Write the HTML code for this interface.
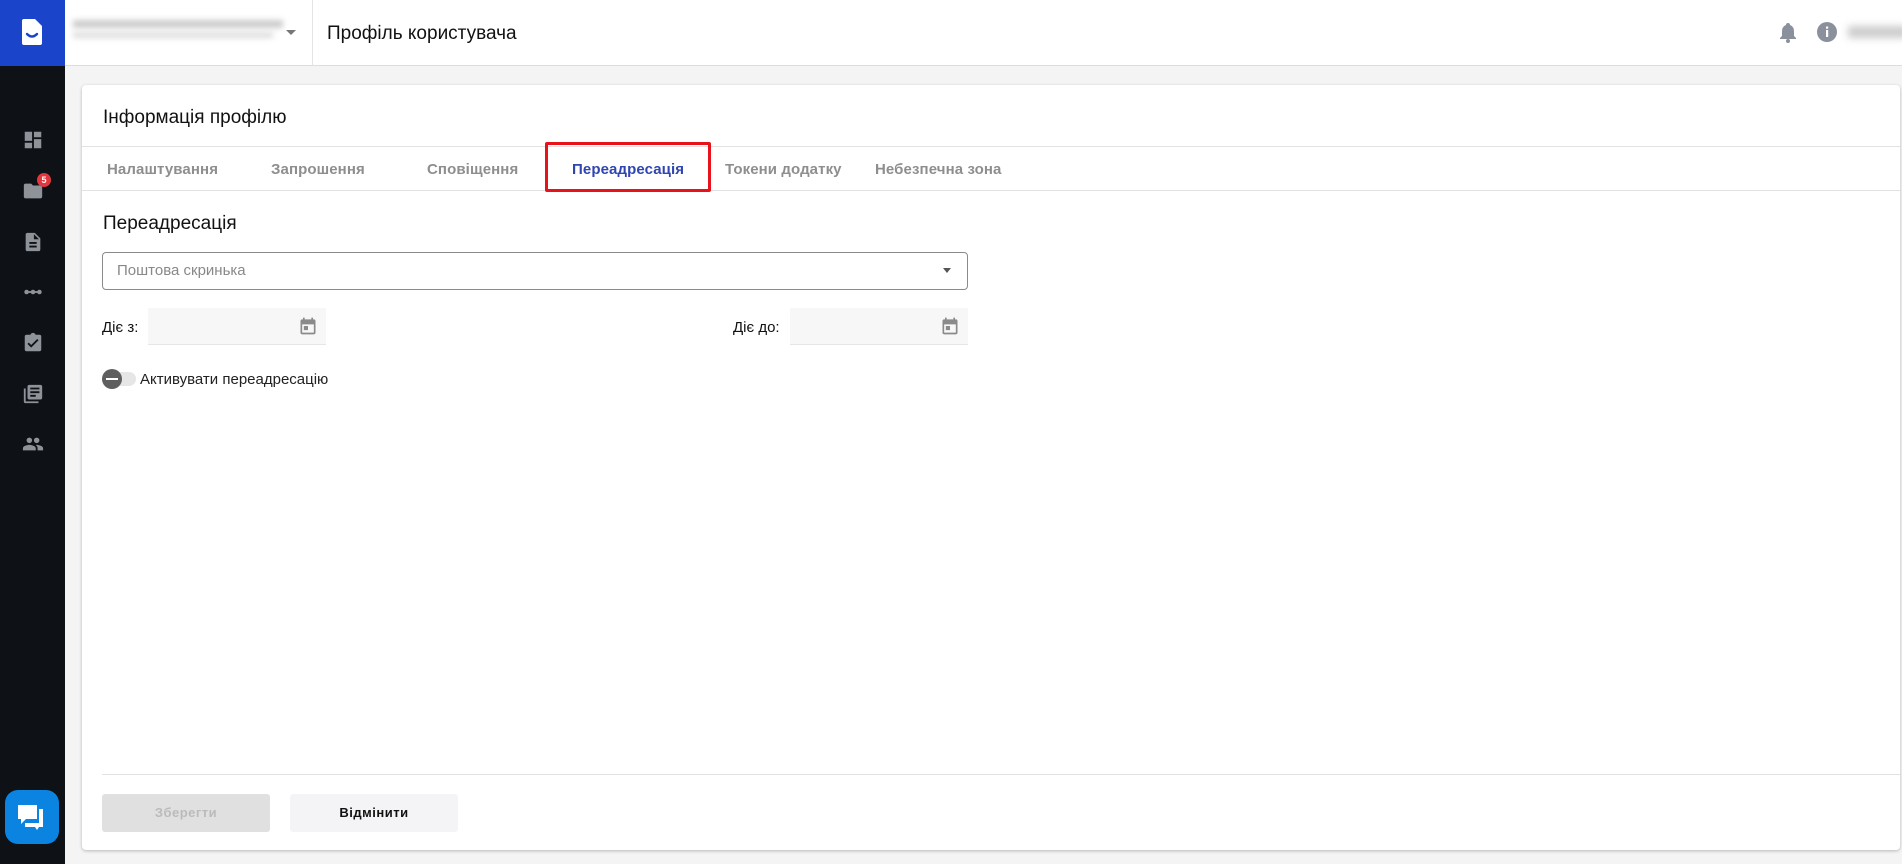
<!DOCTYPE html>
<html><head><meta charset="utf-8"><style>
*{box-sizing:border-box;margin:0;padding:0}
body{width:1902px;height:864px;overflow:hidden;background:#f4f4f4;font-family:"Liberation Sans",sans-serif;position:relative;color:#111}
.abs{position:absolute}
#side{left:0;top:0;width:65px;height:864px;background:#0e1116}
#logo{left:0;top:0;width:65px;height:66px;background:#1a44c9}
#top{left:65px;top:0;right:0;height:66px;background:#fff;border-bottom:1px solid #ddd}
.ic{position:absolute;left:22px;width:22px;height:22px}
#card{left:82px;top:85px;width:1818px;height:765px;background:#fff;border-radius:4px;box-shadow:0 1px 3px rgba(0,0,0,.25)}
.tab{position:absolute;top:161px;font-size:15px;font-weight:bold;color:#8e8e8e;letter-spacing:.1px}
</style></head><body>
<div id="side" class="abs"></div>
<div id="logo" class="abs"><svg class="abs" style="left:21px;top:18px" width="22" height="28" viewBox="0 0 22 28"><path d="M3 1h11l7 7v17a2 2 0 0 1-2 2H3a2 2 0 0 1-2-2V3a2 2 0 0 1 2-2z" fill="#fff"/><path d="M6 16q5 5 10 0" stroke="#1a44c9" stroke-width="2.4" fill="none" stroke-linecap="round"/></svg></div>
<div id="top" class="abs">
 <div class="abs" style="left:8px;top:20px;width:210px;height:8px;background:#ccc;filter:blur(3px)"></div>
 <div class="abs" style="left:8px;top:32px;width:200px;height:6px;background:#ddd;filter:blur(3px)"></div>
 <div class="abs" style="left:221px;top:30px;border:5px solid transparent;border-top:5px solid #777"></div>
 <div class="abs" style="left:247px;top:0;width:1px;height:66px;background:#e4e4e4"></div>
 <div class="abs" style="left:262px;top:23px;font-size:19px">Профіль користувача</div>
 <svg class="abs" style="left:1714px;top:22px" width="18" height="22" viewBox="0 0 18 22"><path d="M9 1a2 2 0 0 1 2 2 6 6 0 0 1 4 6v5l2 2v1H1v-1l2-2V9a6 6 0 0 1 4-6 2 2 0 0 1 2-2z" fill="#8a919c"/><circle cx="9" cy="19" r="2" fill="#8a919c"/></svg>
 <svg class="abs" style="left:1751px;top:21px" width="22" height="22"><circle cx="11" cy="11" r="10" fill="#8a919c"/><rect x="10" y="9" width="2.2" height="7" fill="#fff"/><rect x="10" y="5.5" width="2.2" height="2.2" fill="#fff"/></svg>
 <div class="abs" style="left:1783px;top:26px;width:60px;height:12px;background:#ccc;filter:blur(4px)"></div>
</div>
<svg class="ic" style="top:129px" viewBox="0 0 24 24"><path d="M3 13h8V3H3zm0 8h8v-6H3zm10 0h8V11h-8zm0-18v6h8V3z" fill="#8e9299"/></svg>
<svg class="ic" style="top:180px" viewBox="0 0 24 24"><path d="M10 4H4a2 2 0 0 0-2 2v12a2 2 0 0 0 2 2h16a2 2 0 0 0 2-2V8a2 2 0 0 0-2-2h-8z" fill="#8e9299"/></svg>
<div class="abs" style="left:37px;top:173px;width:14px;height:14px;border-radius:50%;background:#e0383e;color:#fff;font-size:9px;font-weight:bold;text-align:center;line-height:14px">5</div>
<svg class="ic" style="top:231px" viewBox="0 0 24 24"><path d="M14 2H6a2 2 0 0 0-2 2v16a2 2 0 0 0 2 2h12a2 2 0 0 0 2-2V8zm2 16H8v-2h8zm0-4H8v-2h8zm-3-5V3.5L18.5 9z" fill="#8e9299"/></svg>
<svg class="ic" style="top:281px" viewBox="0 0 24 24"><circle cx="5" cy="12" r="2.5" fill="#8e9299"/><circle cx="12" cy="12" r="2.5" fill="#8e9299"/><circle cx="19" cy="12" r="2.5" fill="#8e9299"/><rect x="5" y="11" width="14" height="2" fill="#8e9299"/></svg>
<svg class="ic" style="top:332px" viewBox="0 0 24 24"><path d="M19 3h-4.2A3 3 0 0 0 12 1a3 3 0 0 0-2.8 2H5a2 2 0 0 0-2 2v14a2 2 0 0 0 2 2h14a2 2 0 0 0 2-2V5a2 2 0 0 0-2-2zm-9 14l-4-4 1.4-1.4 2.6 2.6 6.6-6.6L18 9z" fill="#8e9299"/></svg>
<svg class="ic" style="top:383px" viewBox="0 0 24 24"><path d="M4 6H2v14a2 2 0 0 0 2 2h14v-2H4zm16-4H8a2 2 0 0 0-2 2v12a2 2 0 0 0 2 2h12a2 2 0 0 0 2-2V4a2 2 0 0 0-2-2zm-1 9H9V9h10zm-4 4H9v-2h6zm4-8H9V5h10z" fill="#8e9299"/></svg>
<svg class="ic" style="top:433px" viewBox="0 0 24 24"><path d="M16 11a3 3 0 1 0 0-6 3 3 0 0 0 0 6zm-8 0a3 3 0 1 0 0-6 3 3 0 0 0 0 6zm0 2c-2.3 0-7 1.2-7 3.5V19h14v-2.5C15 14.2 10.3 13 8 13zm8 0c-.3 0-.6 0-1 .1 1.2.8 2 2 2 3.4V19h6v-2.5c0-2.3-4.7-3.5-7-3.5z" fill="#8e9299"/></svg>
<div class="abs" style="left:5px;top:790px;width:54px;height:54px;border-radius:13px;background:#0a84e0">
<svg class="abs" style="left:13px;top:15px" width="28" height="26" viewBox="0 0 28 26"><rect x="0" y="0" width="19" height="14" fill="#fff"/><path d="M3 14v5l5-5z" fill="#fff"/><path d="M21 4h4v18h-4l-2 3-2-3H7v-4h14z" fill="#fff"/></svg></div>

<div id="card" class="abs"></div>
<div class="abs" style="left:103px;top:107px;font-size:19px">Інформація профілю</div>
<div class="abs" style="left:82px;top:146px;width:1818px;height:1px;background:#e2e2e2"></div>
<div class="abs" style="left:82px;top:190px;width:1818px;height:1px;background:#e2e2e2"></div>
<div class="tab" style="left:107px">Налаштування</div>
<div class="tab" style="left:271px">Запрошення</div>
<div class="tab" style="left:427px">Сповіщення</div>
<div class="tab" style="left:572px;color:#2f45b0">Переадресація</div>
<div class="tab" style="left:725px">Токени додатку</div>
<div class="tab" style="left:875px">Небезпечна зона</div>
<div class="abs" style="left:545px;top:142px;width:166px;height:50px;border:3px solid #e8121b;border-radius:2px"></div>

<div class="abs" style="left:103px;top:213px;font-size:19px">Переадресація</div>
<div class="abs" style="left:102px;top:252px;width:866px;height:38px;border:1px solid #8a8a8a;border-radius:4px"></div>
<div class="abs" style="left:117px;top:262px;font-size:15px;color:#888">Поштова скринька</div>
<div class="abs" style="left:943px;top:268px;border:4px solid transparent;border-top:5px solid #555"></div>

<div class="abs" style="left:102px;top:319px;font-size:15px">Діє з:</div>
<div class="abs" style="left:148px;top:308px;width:178px;height:37px;background:#f7f7f7;border-bottom:1px solid #e6e6e6"></div>
<div class="abs" style="left:733px;top:319px;font-size:15px">Діє до:</div>
<div class="abs" style="left:790px;top:308px;width:178px;height:37px;background:#f7f7f7;border-bottom:1px solid #e6e6e6"></div>
<svg class="abs" style="left:298px;top:316px" width="20" height="20" viewBox="0 0 24 24"><path d="M19 4h-1V2h-2v2H8V2H6v2H5a2 2 0 0 0-2 2v14a2 2 0 0 0 2 2h14a2 2 0 0 0 2-2V6a2 2 0 0 0-2-2zm0 16H5V10h14zM7 12h5v5H7z" fill="#8a8a8a"/></svg>
<svg class="abs" style="left:940px;top:316px" width="20" height="20" viewBox="0 0 24 24"><path d="M19 4h-1V2h-2v2H8V2H6v2H5a2 2 0 0 0-2 2v14a2 2 0 0 0 2 2h14a2 2 0 0 0 2-2V6a2 2 0 0 0-2-2zm0 16H5V10h14zM7 12h5v5H7z" fill="#8a8a8a"/></svg>

<div class="abs" style="left:106px;top:372px;width:30px;height:14px;border-radius:7px;background:#e6e6e6"></div>
<div class="abs" style="left:102px;top:369px;width:20px;height:20px;border-radius:50%;background:#5f5f5f"></div>
<div class="abs" style="left:106px;top:378px;width:12px;height:2px;background:#fff"></div>
<div class="abs" style="left:140px;top:371px;font-size:15px;color:#222">Активувати переадресацію</div>

<div class="abs" style="left:102px;top:774px;width:1798px;height:1px;background:#e2e2e2"></div>
<div class="abs" style="left:102px;top:794px;width:168px;height:38px;background:#e0e0e0;border-radius:3px;color:#bbb;font-size:13px;font-weight:bold;text-align:center;line-height:38px;letter-spacing:.5px">Зберегти</div>
<div class="abs" style="left:290px;top:794px;width:168px;height:38px;background:#f4f4f6;border-radius:3px;color:#111;font-size:13px;font-weight:bold;text-align:center;line-height:38px;letter-spacing:.5px">Відмінити</div>
</body></html>
